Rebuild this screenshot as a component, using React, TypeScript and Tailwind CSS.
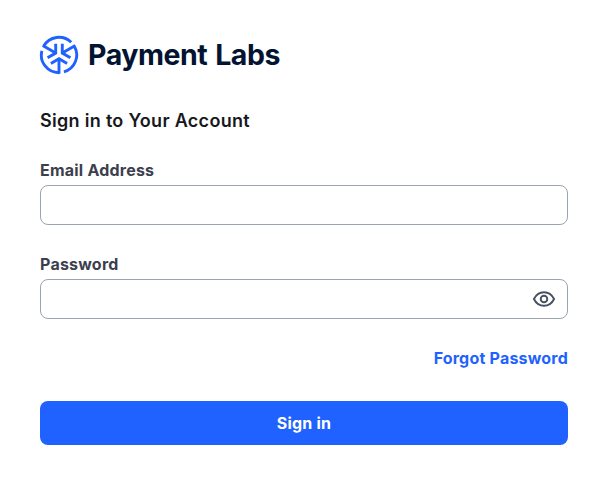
import React from "react";

function LogoMark() {
  return (
    <svg width="40" height="40" viewBox="0 0 40 40" fill="none" stroke="#1f62ff" strokeWidth="2.9" className="-ml-px shrink-0">
      {[0, 120, 240].map((angle) => (
        <g key={angle} transform={`rotate(${angle} 20 20)`}>
          <path d="M11.9 28.5 L20 23.8 L28.1 28.5" />
          <path d="M20 23.8 V38.8" />
          <path d="M20 37.7 A17.6 17.6 0 0 1 2.9 15.8" />
        </g>
      ))}
    </svg>
  );
}

function EyeIcon() {
  return (
    <svg width="24" height="24" viewBox="0 0 24 24" fill="none" stroke="#475164" strokeWidth="1.9" strokeLinejoin="round">
      <path d="M1.9 12 C4 7.9 7.6 5.2 12 5.2 S20 7.9 22.1 12 C20 16.1 16.4 18.8 12 18.8 S4 16.1 1.9 12 Z" />
      <circle cx="12" cy="12" r="3.3" />
    </svg>
  );
}

function Field({ label, type, children }: { label: string; type: string; children?: React.ReactNode }) {
  return (
    <div>
      <label className="block h-[29px] text-base leading-[29px] font-[650] tracking-[0.22px] text-[#3c3f4e]">{label}</label>
      <div className="flex h-10 items-center rounded-lg border border-[#99a3b2] bg-white pr-[11px]">
        <input type={type} aria-label={label} className="h-full min-w-0 flex-1 bg-transparent px-3 outline-none" />
        {children}
      </div>
    </div>
  );
}

export default function App() {
  return (
    <main className="h-[486px] w-[612px] bg-white px-10 pt-[35px] pr-11 font-['Inter',sans-serif]">
      <header className="flex h-10 items-center">
        <LogoMark />
        <span className="ml-[9px] text-[28.5px] leading-10 font-bold tracking-[-0.45px] whitespace-nowrap text-[#031332] [word-spacing:1.5px]">Payment Labs</span>
      </header>
      <h1 className="mt-8 text-lg leading-7 font-semibold tracking-[0.3px] text-[#17181c]">Sign in to Your Account</h1>
      <form className="mt-[21px] flex flex-col">
        <Field label="Email Address" type="email" />
        <div className="mt-[25px]">
          <Field label="Password" type="password">
            <button type="button" aria-label="Show password"><EyeIcon /></button>
          </Field>
        </div>
        <a className="mt-[27px] self-end text-base leading-6 font-[650] tracking-[0.21px] text-[#1f62ff]">Forgot Password</a>
        <button type="button" className="mt-[31px] h-11 rounded-lg bg-[#1f62ff] text-base font-[650] tracking-[0.22px] text-white">Sign in</button>
      </form>
    </main>
  );
}
